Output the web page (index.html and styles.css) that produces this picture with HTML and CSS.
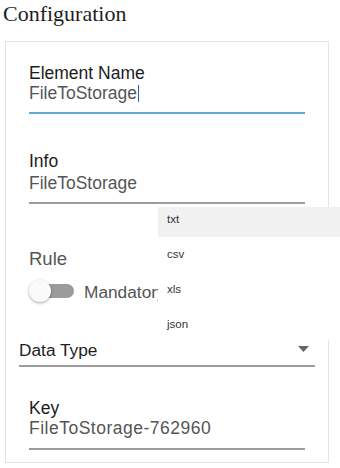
FILE: index.html
```html
<!DOCTYPE html>
<html>
<head>
<meta charset="utf-8">
<link rel="stylesheet" href="styles.css">
</head>
<body>
<h1 class="title">Configuration</h1>
<div class="card">
  <div class="field field-name">
    <div class="label">Element Name</div>
    <div class="value active">FileToStorage<span class="caret"></span></div>
  </div>
  <div class="field field-info">
    <div class="label">Info</div>
    <div class="value">FileToStorage</div>
  </div>
  <div class="rule">
    <div class="rule-label">Rule</div>
    <div class="toggle-row">
      <span class="toggle"><span class="track"></span><span class="thumb"></span></span>
      <span class="toggle-text">Mandatory</span>
    </div>
  </div>
  <div class="select">
    <span class="select-text">Data Type</span>
    <svg class="arrow" width="11" height="6" viewBox="0 0 11 6"><path d="M0 0 L11 0 L5.5 6 Z" fill="#666666"/></svg>
  </div>
  <div class="field field-key">
    <div class="label">Key</div>
    <div class="value key">FileToStorage-762960</div>
  </div>
</div>
<ul class="menu">
  <li class="item first">txt</li>
  <li class="item">csv</li>
  <li class="item">xls</li>
  <li class="item last">json</li>
</ul>
</body>
</html>
```
FILE: styles.css
```css
html, body {
  margin: 0;
  padding: 0;
  background: #ffffff;
}
body {
  width: 340px;
  height: 468px;
  overflow: hidden;
  position: relative;
  font-family: "Liberation Sans", Arial, sans-serif;
}
.title {
  margin: 0;
  padding: 1px 0 0 3px;
  height: 41px;
  box-sizing: border-box;
  font-family: "Liberation Serif", "Times New Roman", serif;
  font-weight: normal;
  font-size: 22px;
  line-height: 26px;
  color: #1e1e1e;
}
.card {
  margin-left: 5px;
  width: 324px;
  height: 422px;
  box-sizing: border-box;
  border: 1px solid #e4e4e4;
  padding-top: 21px;
}
.field {
  margin: 0 23px;
}
.label {
  font-size: 17.5px;
  line-height: 20px;
  color: #1c1c1c;
}
.value {
  font-size: 17.5px;
  line-height: 20px;
  color: #555555;
  padding-bottom: 8px;
  border-bottom: 2px solid #9c9c9c;
}
.value.active {
  padding-bottom: 9px;
  border-bottom-color: #63a8d3;
}
.caret {
  display: inline-block;
  width: 1px;
  height: 17px;
  background: #2b5fb5;
  vertical-align: -3px;
  margin-left: 1px;
}
.field-info {
  margin-top: 37px;
}
.field-info .value {
  margin-top: 2px;
  padding-bottom: 9px;
}
.rule {
  margin: 44px 23px 0;
}
.rule-label {
  font-size: 18.5px;
  line-height: 22px;
  color: #555555;
}
.toggle-row {
  display: flex;
  align-items: center;
  margin-top: 10px;
  height: 24px;
}
.toggle {
  position: relative;
  width: 47px;
  height: 24px;
  margin-left: 0;
}
.track {
  position: absolute;
  left: 11px;
  top: 4px;
  width: 34px;
  height: 14px;
  border-radius: 7px;
  background: #9b9b9b;
}
.thumb {
  position: absolute;
  left: 0;
  top: 0;
  width: 22px;
  height: 22px;
  border-radius: 50%;
  background: #fafafa;
  box-shadow: 0 1px 3px rgba(0,0,0,0.35);
}
.toggle-text {
  margin-left: 8px;
  font-size: 17.3px;
  line-height: 20px;
  color: #555555;
  white-space: nowrap;
}
.select {
  margin: 36px 13px 0;
  display: flex;
  align-items: center;
  justify-content: space-between;
  padding-bottom: 5px;
  border-bottom: 2px solid #9c9c9c;
}
.select-text {
  font-size: 17.3px;
  line-height: 20px;
  color: #1e1e1e;
}
.arrow {
  display: block;
  flex: none;
  margin-right: 6px;
  margin-top: -2px;
}
.field-key {
  margin-top: 31px;
}
.field-key .value {
  margin-top: 0;
  padding-bottom: 10px;
}
.key {
  letter-spacing: 0.5px;
}
.menu {
  position: absolute;
  left: 158px;
  top: 207px;
  width: 182px;
  margin: 0;
  padding: 0;
  list-style: none;
  background: #ffffff;
  font-size: 11.5px;
  color: #333333;
}
.item {
  height: 35px;
  line-height: 35px;
  padding-left: 9px;
}
.item.first {
  height: 30px;
  line-height: 24px;
  background: #f1f1f1;
}
.item.last {
  height: 33px;
}
```
